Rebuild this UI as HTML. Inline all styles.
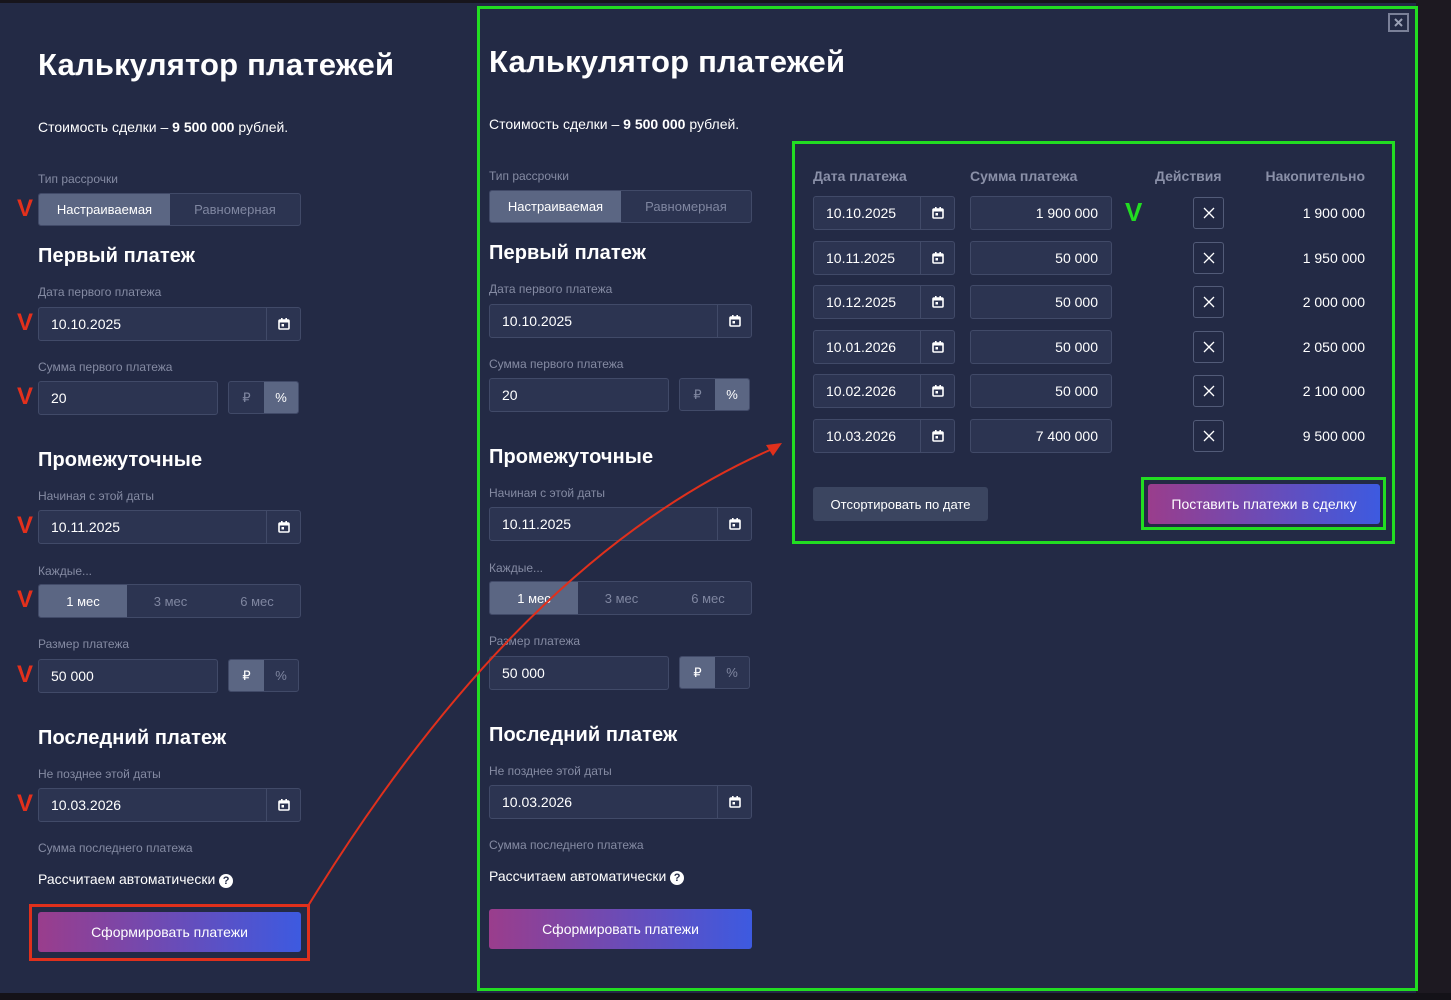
<!DOCTYPE html>
<html><head><meta charset="utf-8"><style>
*{box-sizing:border-box;margin:0;padding:0}
body{width:1451px;height:1000px;background:#232a45;position:relative;overflow:hidden;font-family:"Liberation Sans",Arial,sans-serif;color:#fff}
.a{position:absolute}
.f{position:absolute;top:0;width:270px;height:1000px}
.t{font-size:31px;font-weight:bold;white-space:nowrap;letter-spacing:0.2px}
.h{font-size:20px;font-weight:bold;white-space:nowrap;letter-spacing:0.1px}
.l{font-size:12px;color:#858ba3;white-space:nowrap}
.p{font-size:14px;white-space:nowrap}
.in{background:#2c3451;border:1px solid #414a68;border-radius:3px;font-size:14px;color:#fff;display:flex;align-items:center;padding-left:12px}
.cal{position:absolute;right:0;top:0;bottom:0;width:34px;border-left:1px solid #414a68;display:flex;align-items:center;justify-content:center}
.seg{display:flex;border:1px solid #414a68;border-radius:3px;overflow:hidden;background:#2c3451}
.seg div{display:flex;align-items:center;justify-content:center;font-size:13px;color:#7f86a0}
.seg .on{background:#5b6683;color:#fff}
.btn{background:linear-gradient(90deg,#9a3d8c,#3d5ae0);border-radius:3px;display:flex;align-items:center;justify-content:center;font-size:14px;color:#fff}
.rv{position:absolute;left:17px;color:#e3301c;font-weight:bold;font-size:24px;font-family:"Liberation Sans",sans-serif}
.hd{font-size:14px;font-weight:bold;color:#8a90a8;white-space:nowrap}
.x{border:1px solid #525b78;border-radius:3px;width:31px;height:32px;display:flex;align-items:center;justify-content:center}
</style></head><body>
<div class="a" style="left:0;top:0;width:1451px;height:3px;background:#17151c"></div>
<div class="a" style="left:1416px;top:0;width:35px;height:1000px;background:#1d1921"></div>
<div class="a" style="left:0;top:993px;width:1451px;height:7px;background:#141218"></div>

<svg width="0" height="0" style="position:absolute"><defs>
<symbol id="c" viewBox="0 0 14 14"><rect x="2" y="3" width="10" height="9" rx="1" fill="none" stroke="#fff" stroke-width="1.6"/><rect x="2" y="3" width="10" height="2.5" fill="#fff"/><rect x="4" y="1" width="1.6" height="3" fill="#fff"/><rect x="8.4" y="1" width="1.6" height="3" fill="#fff"/><rect x="4.5" y="7" width="2.5" height="2.5" fill="#fff"/></symbol>
<symbol id="xx" viewBox="0 0 12 12"><path d="M1 1L11 11M11 1L1 11" stroke="#fff" stroke-width="1.3"/></symbol>
</defs></svg>

<div class="f" style="left:38px;top:0">
<div class="a t" style="top:47px">Калькулятор платежей</div>
<div class="a p" style="top:119px">Стоимость сделки – <b>9 500 000</b> рублей.</div>
<div class="a l" style="top:172px">Тип рассрочки</div>
<div class="a seg" style="top:193px;width:263px;height:33px"><div class="on" style="width:131px">Настраиваемая</div><div style="flex:1">Равномерная</div></div>
<div class="a h" style="top:245px">Первый платеж</div>
<div class="a l" style="top:285px">Дата первого платежа</div>
<div class="a in" style="top:307px;width:263px;height:34px">10.10.2025<div class="cal"><svg width="14" height="14"><use href="#c"/></svg></div></div>
<div class="a l" style="top:360px">Сумма первого платежа</div>
<div class="a in" style="top:381px;width:180px;height:34px">20</div>
<div class="a seg" style="top:381px;left:190px;width:71px;height:33px"><div style="width:35px">₽</div><div class="on" style="flex:1">%</div></div>
<div class="a h" style="top:449px">Промежуточные</div>
<div class="a l" style="top:489px">Начиная с этой даты</div>
<div class="a in" style="top:510px;width:263px;height:34px">10.11.2025<div class="cal"><svg width="14" height="14"><use href="#c"/></svg></div></div>
<div class="a l" style="top:564px">Каждые...</div>
<div class="a seg" style="top:584px;width:263px;height:34px"><div class="on" style="width:88px">1 мес</div><div style="width:87px">3 мес</div><div style="flex:1">6 мес</div></div>
<div class="a l" style="top:637px">Размер платежа</div>
<div class="a in" style="top:659px;width:180px;height:34px">50 000</div>
<div class="a seg" style="top:659px;left:190px;width:71px;height:33px"><div class="on" style="width:35px">₽</div><div style="flex:1">%</div></div>
<div class="a h" style="top:727px">Последний платеж</div>
<div class="a l" style="top:767px">Не позднее этой даты</div>
<div class="a in" style="top:788px;width:263px;height:34px">10.03.2026<div class="cal"><svg width="14" height="14"><use href="#c"/></svg></div></div>
<div class="a l" style="top:841px">Сумма последнего платежа</div>
<div class="a p" style="top:871px">Рассчитаем автоматически <span style="display:inline-block;width:14px;height:14px;border-radius:50%;background:#fff;color:#232a45;font-size:11px;font-weight:bold;text-align:center;line-height:14px;vertical-align:0px">?</span></div>
<div class="a btn" style="top:912px;width:263px;height:40px">Сформировать платежи</div>
</div>

<div class="f" style="left:489px;top:-3px">
<div class="a t" style="top:47px">Калькулятор платежей</div>
<div class="a p" style="top:119px">Стоимость сделки – <b>9 500 000</b> рублей.</div>
<div class="a l" style="top:172px">Тип рассрочки</div>
<div class="a seg" style="top:193px;width:263px;height:33px"><div class="on" style="width:131px">Настраиваемая</div><div style="flex:1">Равномерная</div></div>
<div class="a h" style="top:245px">Первый платеж</div>
<div class="a l" style="top:285px">Дата первого платежа</div>
<div class="a in" style="top:307px;width:263px;height:34px">10.10.2025<div class="cal"><svg width="14" height="14"><use href="#c"/></svg></div></div>
<div class="a l" style="top:360px">Сумма первого платежа</div>
<div class="a in" style="top:381px;width:180px;height:34px">20</div>
<div class="a seg" style="top:381px;left:190px;width:71px;height:33px"><div style="width:35px">₽</div><div class="on" style="flex:1">%</div></div>
<div class="a h" style="top:449px">Промежуточные</div>
<div class="a l" style="top:489px">Начиная с этой даты</div>
<div class="a in" style="top:510px;width:263px;height:34px">10.11.2025<div class="cal"><svg width="14" height="14"><use href="#c"/></svg></div></div>
<div class="a l" style="top:564px">Каждые...</div>
<div class="a seg" style="top:584px;width:263px;height:34px"><div class="on" style="width:88px">1 мес</div><div style="width:87px">3 мес</div><div style="flex:1">6 мес</div></div>
<div class="a l" style="top:637px">Размер платежа</div>
<div class="a in" style="top:659px;width:180px;height:34px">50 000</div>
<div class="a seg" style="top:659px;left:190px;width:71px;height:33px"><div class="on" style="width:35px">₽</div><div style="flex:1">%</div></div>
<div class="a h" style="top:727px">Последний платеж</div>
<div class="a l" style="top:767px">Не позднее этой даты</div>
<div class="a in" style="top:788px;width:263px;height:34px">10.03.2026<div class="cal"><svg width="14" height="14"><use href="#c"/></svg></div></div>
<div class="a l" style="top:841px">Сумма последнего платежа</div>
<div class="a p" style="top:871px">Рассчитаем автоматически <span style="display:inline-block;width:14px;height:14px;border-radius:50%;background:#fff;color:#232a45;font-size:11px;font-weight:bold;text-align:center;line-height:14px;vertical-align:0px">?</span></div>
<div class="a btn" style="top:912px;width:263px;height:40px">Сформировать платежи</div>
</div>

<div class="rv" style="top:195px">V</div>
<div class="rv" style="top:309px">V</div>
<div class="rv" style="top:383px">V</div>
<div class="rv" style="top:512px">V</div>
<div class="rv" style="top:586px">V</div>
<div class="rv" style="top:661px">V</div>
<div class="rv" style="top:790px">V</div>

<div class="a hd" style="left:813px;top:168px">Дата платежа</div>
<div class="a hd" style="left:970px;top:168px">Сумма платежа</div>
<div class="a hd" style="left:1155px;top:168px">Действия</div>
<div class="a hd" style="left:1225px;top:168px;width:140px;text-align:right">Накопительно</div>

<div class="a in" style="left:813px;top:196px;width:142px;height:34px">10.10.2025<div class="cal"><svg width="14" height="14"><use href="#c"/></svg></div></div>
<div class="a in" style="left:970px;top:196px;width:142px;height:34px;justify-content:flex-end;padding-right:13px">1 900 000</div>
<div class="a x" style="left:1193px;top:197px"><svg width="12" height="12"><use href="#xx"/></svg></div>
<div class="a p" style="left:1245px;top:205px;width:120px;text-align:right">1 900 000</div>

<div class="a in" style="left:813px;top:241px;width:142px;height:34px">10.11.2025<div class="cal"><svg width="14" height="14"><use href="#c"/></svg></div></div>
<div class="a in" style="left:970px;top:241px;width:142px;height:34px;justify-content:flex-end;padding-right:13px">50 000</div>
<div class="a x" style="left:1193px;top:242px"><svg width="12" height="12"><use href="#xx"/></svg></div>
<div class="a p" style="left:1245px;top:250px;width:120px;text-align:right">1 950 000</div>

<div class="a in" style="left:813px;top:285px;width:142px;height:34px">10.12.2025<div class="cal"><svg width="14" height="14"><use href="#c"/></svg></div></div>
<div class="a in" style="left:970px;top:285px;width:142px;height:34px;justify-content:flex-end;padding-right:13px">50 000</div>
<div class="a x" style="left:1193px;top:286px"><svg width="12" height="12"><use href="#xx"/></svg></div>
<div class="a p" style="left:1245px;top:294px;width:120px;text-align:right">2 000 000</div>

<div class="a in" style="left:813px;top:330px;width:142px;height:34px">10.01.2026<div class="cal"><svg width="14" height="14"><use href="#c"/></svg></div></div>
<div class="a in" style="left:970px;top:330px;width:142px;height:34px;justify-content:flex-end;padding-right:13px">50 000</div>
<div class="a x" style="left:1193px;top:331px"><svg width="12" height="12"><use href="#xx"/></svg></div>
<div class="a p" style="left:1245px;top:339px;width:120px;text-align:right">2 050 000</div>

<div class="a in" style="left:813px;top:374px;width:142px;height:34px">10.02.2026<div class="cal"><svg width="14" height="14"><use href="#c"/></svg></div></div>
<div class="a in" style="left:970px;top:374px;width:142px;height:34px;justify-content:flex-end;padding-right:13px">50 000</div>
<div class="a x" style="left:1193px;top:375px"><svg width="12" height="12"><use href="#xx"/></svg></div>
<div class="a p" style="left:1245px;top:383px;width:120px;text-align:right">2 100 000</div>

<div class="a in" style="left:813px;top:419px;width:142px;height:34px">10.03.2026<div class="cal"><svg width="14" height="14"><use href="#c"/></svg></div></div>
<div class="a in" style="left:970px;top:419px;width:142px;height:34px;justify-content:flex-end;padding-right:13px">7 400 000</div>
<div class="a x" style="left:1193px;top:420px"><svg width="12" height="12"><use href="#xx"/></svg></div>
<div class="a p" style="left:1245px;top:428px;width:120px;text-align:right">9 500 000</div>

<div class="a" style="left:1125px;top:197px;color:#22dd22;font-weight:bold;font-size:26px">V</div>

<div class="a" style="left:813px;top:487px;width:175px;height:34px;background:#3b4560;border-radius:3px;display:flex;align-items:center;justify-content:center;font-size:13px">Отсортировать по дате</div>
<div class="a btn" style="left:1148px;top:484px;width:232px;height:40px">Поставить платежи в сделку</div>

<div class="a" style="left:1388px;top:13px;width:21px;height:19px;border:2px solid #7a8098;display:flex;align-items:center;justify-content:center"><svg width="9" height="9"><path d="M1 1L8 8M8 1L1 8" stroke="#9aa0b5" stroke-width="2"/></svg></div>

<div class="a" style="left:477px;top:6px;width:941px;height:985px;border:3px solid #22dd22"></div>
<div class="a" style="left:792px;top:141px;width:603px;height:403px;border:3px solid #22dd22"></div>
<div class="a" style="left:1141px;top:477px;width:245px;height:53px;border:3px solid #22dd22"></div>
<div class="a" style="left:29px;top:904px;width:281px;height:57px;border:3px solid #e0301c"></div>
<svg class="a" style="left:0;top:0" width="1451" height="1000"><path d="M308 906 Q520 560 770 450" fill="none" stroke="#e0301c" stroke-width="2"/><path d="M782 443 L766 445 L773 456 Z" fill="#e0301c"/></svg>
</body></html>
